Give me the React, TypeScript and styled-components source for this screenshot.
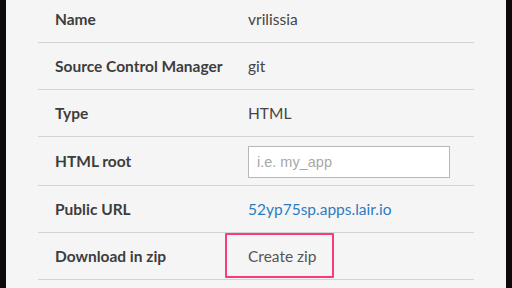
import React from "react";
import styled, { createGlobalStyle } from "styled-components";

const Global = createGlobalStyle`
  html, body { margin: 0; padding: 0; background: #0b0809; overflow: hidden; }
  body { width: 512px; height: 288px; }
  #root { height: 288px; }
`;

const Page = styled.div`
  display: flex;
  height: 288px;
  background: #0b0809;
`;

const Gutter = styled.div`
  width: 6px;
  flex: none;
  background: #0d090b;
`;

const Panel = styled.div`
  width: 500px;
  flex: none;
  background: #f5f5f5;
  overflow: hidden;
  padding-left: 32px;
  box-sizing: border-box;
`;

const List = styled.div`
  width: 436px;
  margin-top: -4px;
  display: flex;
  flex-direction: column;
`;

const Row = styled.div<{ $h?: number }>`
  display: flex;
  align-items: center;
  height: ${(p) => p.$h ?? 46}px;
  border-bottom: 1px solid #d4d4d4;
  font-family: "Source Sans Pro", Lato, "Open Sans", sans-serif;
  font-size: 15.5px;
`;

const Label = styled.div`
  width: 193px;
  padding-left: 17px;
  flex: none;
  font-weight: 700;
  color: #3d3d3d;
`;

const Value = styled.div`
  color: #444;
  flex: 1;
`;

const Link = styled.a`
  color: #2d7cc1;
  text-decoration: none;
`;

const Input = styled.input`
  width: 202px;
  height: 32px;
  box-sizing: border-box;
  border: 1px solid #b8b8b8;
  background: #fff;
  padding: 0 8px;
  font-family: "Liberation Sans", Arial, sans-serif;
  font-size: 14.5px;
  color: #444;
  outline: none;
  margin-top: 2px;
  &::placeholder { color: #a8a8a8; }
`;

const ZipButton = styled.button`
  margin-left: -23px;
  margin-top: -1px;
  height: 45px;
  width: 109px;
  box-sizing: border-box;
  border: 2px solid #fb3b78;
  border-radius: 1px;
  background: transparent;
  color: #555;
  font-family: "Source Sans Pro", Lato, "Open Sans", sans-serif;
  font-size: 15.5px;
  text-align: left;
  padding: 0 0 0 21px;
  cursor: pointer;
`;

export default function App() {
  return (
    <Page>
      <Global />
      <Gutter />
      <Panel>
        <List>
          <Row>
            <Label>Name</Label>
            <Value>vrilissia</Value>
          </Row>
          <Row>
            <Label>Source Control Manager</Label>
            <Value>git</Value>
          </Row>
          <Row>
            <Label>Type</Label>
            <Value>HTML</Value>
          </Row>
          <Row $h={48}>
            <Label>HTML root</Label>
            <Value>
              <Input placeholder="i.e. my_app" />
            </Value>
          </Row>
          <Row>
            <Label>Public URL</Label>
            <Value>
              <Link href="#">52yp75sp.apps.lair.io</Link>
            </Value>
          </Row>
          <Row>
            <Label>Download in zip</Label>
            <Value>
              <ZipButton>Create zip</ZipButton>
            </Value>
          </Row>
        </List>
      </Panel>
      <Gutter />
    </Page>
  );
}
